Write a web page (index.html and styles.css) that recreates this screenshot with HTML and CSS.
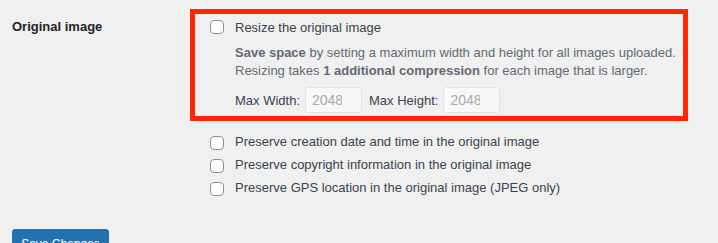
FILE: index.html
```html
<!DOCTYPE html>
<html lang="en">
<head>
<meta charset="utf-8">
<title>Original image settings</title>
<link rel="stylesheet" href="styles.css">
</head>
<body>
<div class="page">
  <div class="row">
    <div class="label">Original image</div>
    <div class="field">
      <div class="highlight">
        <label class="check"><input type="checkbox" class="box"><span>Resize the original image</span></label>
        <p class="desc"><strong>Save space</strong> by setting a maximum width and height for all images uploaded.<br>Resizing takes <strong>1 additional compression</strong> for each image that is larger.</p>
        <div class="dims">
          <span class="dim-label">Max Width:</span>
          <input class="num" type="text" placeholder="2048" disabled>
          <span class="dim-label">Max Height:</span>
          <input class="num" type="text" placeholder="2048" disabled>
        </div>
      </div>
      <div class="checks">
        <label class="check"><input type="checkbox" class="box"><span>Preserve creation date and time in the original image</span></label>
        <label class="check"><input type="checkbox" class="box"><span>Preserve copyright information in the original image</span></label>
        <label class="check"><input type="checkbox" class="box"><span>Preserve GPS location in the original image (JPEG only)</span></label>
      </div>
    </div>
  </div>
  <div class="actions"><button class="btn" type="button">Save Changes</button></div>
</div>
</body>
</html>
```

FILE: styles.css
```css
html, body {
  margin: 0;
  padding: 0;
  background: #f0f0f1;
}
body {
  font-family: "Liberation Sans", Arial, sans-serif;
  font-size: 13px;
  color: #3c434a;
  overflow: hidden;
}
.page {
  padding: 9px 0 0 12px;
}
.row {
  display: flex;
}
.label {
  width: 178px;
  flex: none;
  font-weight: 700;
  color: #1d2327;
  line-height: 20px;
  padding-top: 8px;
}
.field {
  display: flex;
  flex-direction: column;
}
.highlight {
  width: 498px;
  height: 112px;
  box-sizing: border-box;
  border: 5px solid #ff2600;
  padding: 4px 0 0 15px;
}
.check {
  display: flex;
  align-items: flex-start;
  gap: 11px;
  height: 20px;
  line-height: 20px;
  white-space: nowrap;
}
.box {
  appearance: none;
  -webkit-appearance: none;
  margin: 2px 0 0 0;
  width: 14px;
  height: 14px;
  flex: none;
  box-sizing: border-box;
  border: 1px solid #8c8f94;
  border-radius: 4px;
  background: #fff;
}
.desc {
  margin: 6px 0 0 25px;
  color: #646970;
  line-height: 18.2px;
  white-space: nowrap;
}
.desc strong {
  font-weight: 700;
}
.dims {
  display: flex;
  align-items: center;
  margin: 7px 0 0 25px;
}
.dim-label {
  margin-right: 5px;
}
.num {
  width: 57px;
  height: 26px;
  box-sizing: border-box;
  margin: 0 7px 0 0;
  padding: 0 19px 0 6px;
  font-family: inherit;
  font-size: 14px;
  border: 1px solid rgba(220, 220, 222, 0.75);
  border-radius: 4px;
  background: rgba(255, 255, 255, 0.5);
  color: #a7aaad;
}
.num::placeholder {
  color: #a7aaad;
  opacity: 1;
}
.checks {
  display: flex;
  flex-direction: column;
  gap: 2.85px;
  padding: 11px 0 0 20px;
}
.checks .box {
  margin-top: 4px;
}
.actions {
  padding-top: 31px;
}
.btn {
  font-family: inherit;
  font-size: 12px;
  color: #fff;
  background: #2271b1;
  border: 1px solid #2271b1;
  border-radius: 3px;
  height: 30px;
  padding: 0;
  width: 97px;
  line-height: 28px;
  text-align: center;
}
```
